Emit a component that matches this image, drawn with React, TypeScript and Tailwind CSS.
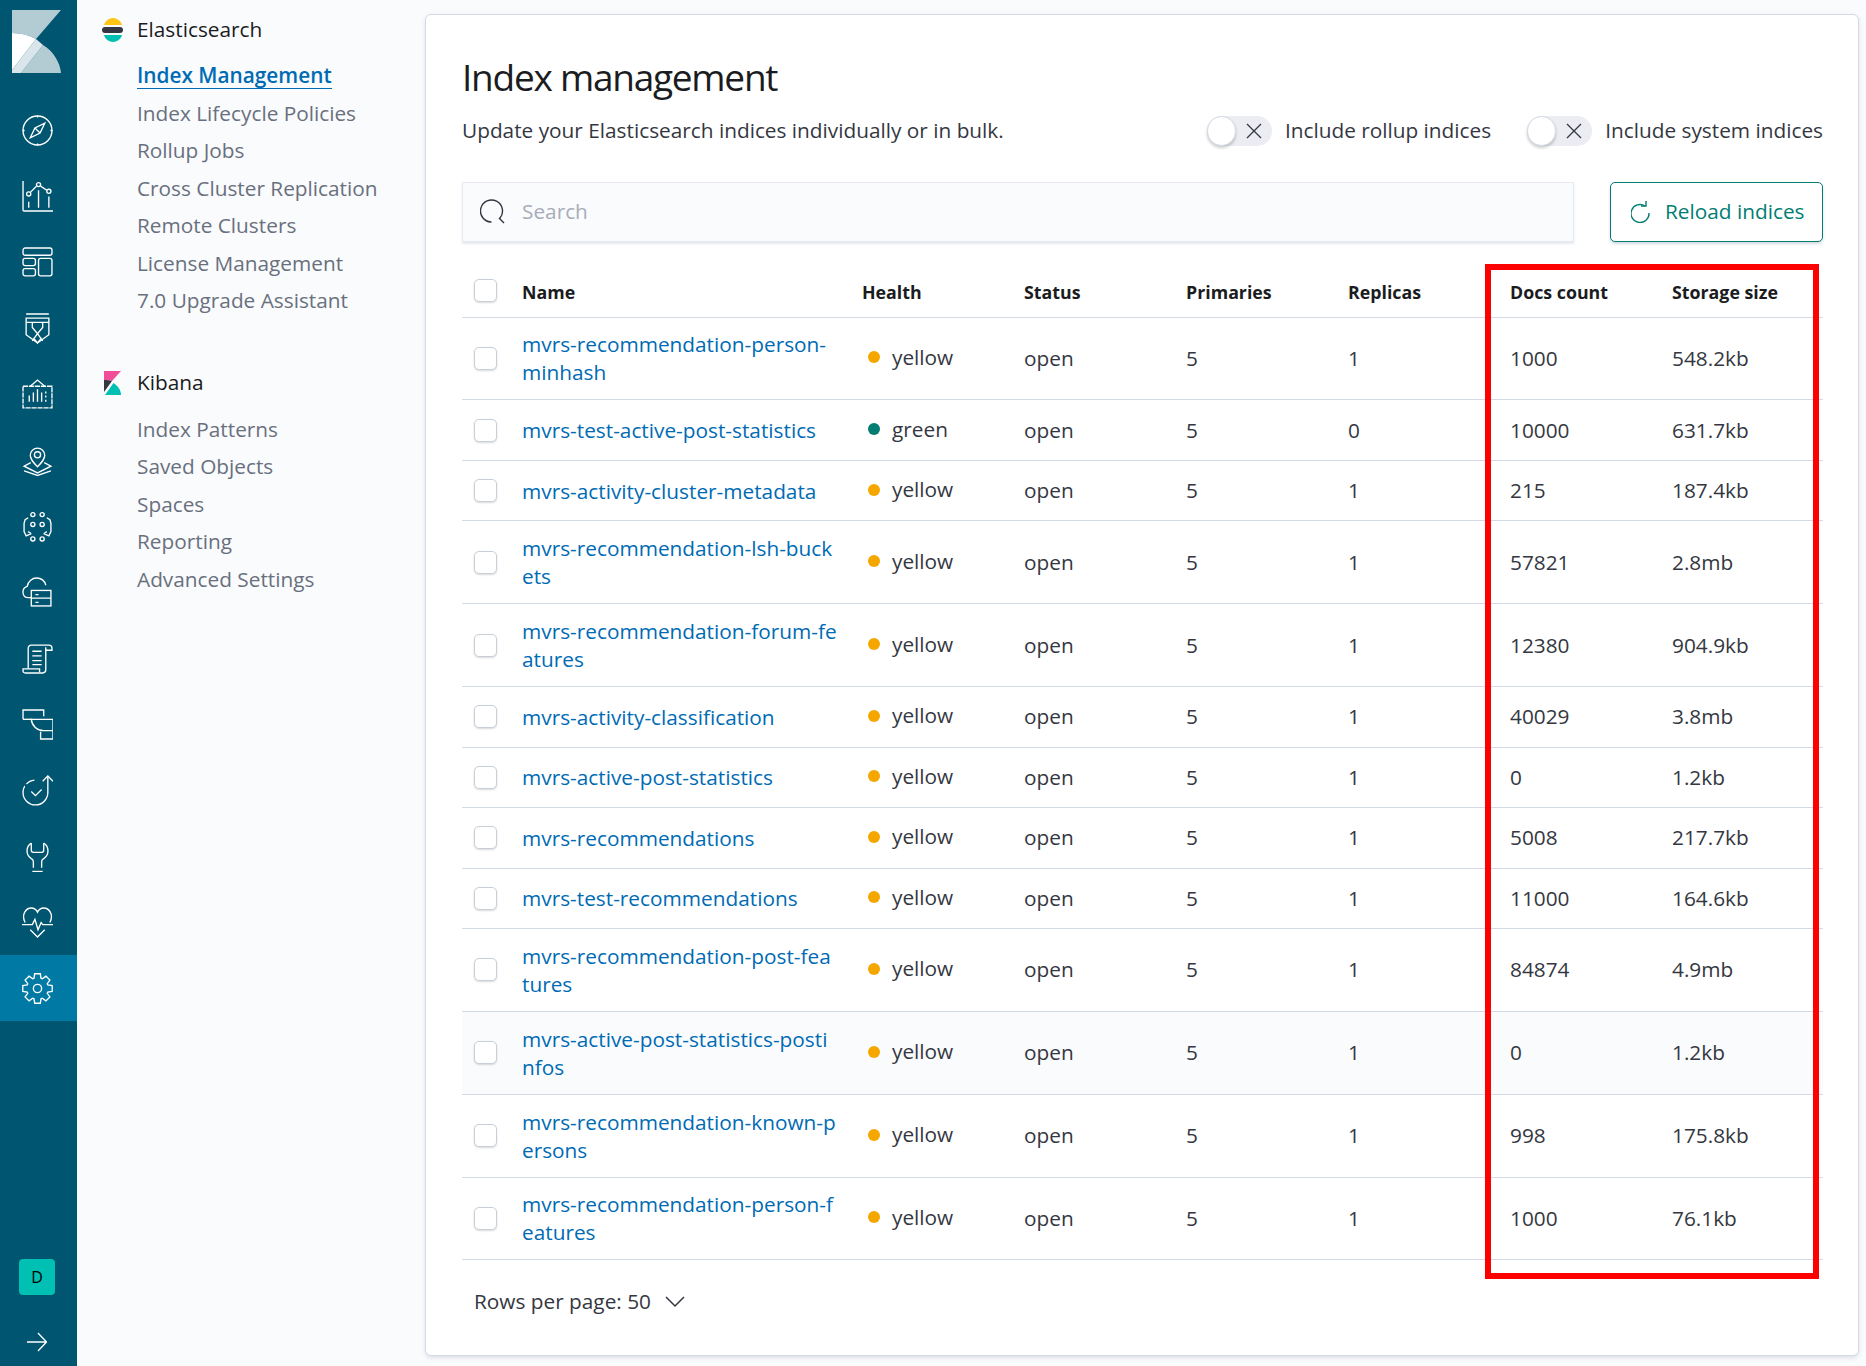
import type { ReactNode } from "react";

const elasticLinks = [
  "Index Lifecycle Policies",
  "Rollup Jobs",
  "Cross Cluster Replication",
  "Remote Clusters",
  "License Management",
  "7.0 Upgrade Assistant",
];

const kibanaLinks = ["Index Patterns", "Saved Objects", "Spaces", "Reporting", "Advanced Settings"];

const rows = [
  { name: "mvrs-recommendation-person-minhash", health: "yellow", replicas: 1, docs: "1000", size: "548.2kb", tall: true },
  { name: "mvrs-test-active-post-statistics", health: "green", replicas: 0, docs: "10000", size: "631.7kb" },
  { name: "mvrs-activity-cluster-metadata", health: "yellow", replicas: 1, docs: "215", size: "187.4kb" },
  { name: "mvrs-recommendation-lsh-buckets", health: "yellow", replicas: 1, docs: "57821", size: "2.8mb", tall: true },
  { name: "mvrs-recommendation-forum-features", health: "yellow", replicas: 1, docs: "12380", size: "904.9kb", tall: true },
  { name: "mvrs-activity-classification", health: "yellow", replicas: 1, docs: "40029", size: "3.8mb" },
  { name: "mvrs-active-post-statistics", health: "yellow", replicas: 1, docs: "0", size: "1.2kb" },
  { name: "mvrs-recommendations", health: "yellow", replicas: 1, docs: "5008", size: "217.7kb" },
  { name: "mvrs-test-recommendations", health: "yellow", replicas: 1, docs: "11000", size: "164.6kb" },
  { name: "mvrs-recommendation-post-features", health: "yellow", replicas: 1, docs: "84874", size: "4.9mb", tall: true },
  { name: "mvrs-active-post-statistics-postinfos", health: "yellow", replicas: 1, docs: "0", size: "1.2kb", tall: true, hover: true },
  { name: "mvrs-recommendation-known-persons", health: "yellow", replicas: 1, docs: "998", size: "175.8kb", tall: true },
  { name: "mvrs-recommendation-person-features", health: "yellow", replicas: 1, docs: "1000", size: "76.1kb", tall: true },
];

const NavIcon = ({ children }: { children: ReactNode }) => (
  <svg width="31" height="31" viewBox="0 0 30 30" fill="none" stroke="#fff" strokeWidth="1.3">
    {children}
  </svg>
);

// blocky 8-tooth gear for the management item
const gearPoints = () => {
  const pts: string[] = [];
  for (let i = 0; i < 8; i++) {
    const a = (i * Math.PI) / 4;
    [
      [-0.33, 10.5],
      [-0.19, 14.5],
      [0.19, 14.5],
      [0.33, 10.5],
    ].forEach(([da, r]) => {
      pts.push(`${(15 + r * Math.sin(a + da)).toFixed(2)},${(15 - r * Math.cos(a + da)).toFixed(2)}`);
    });
  }
  return pts.join(" ");
};

const navIcons: ReactNode[] = [
  <>
    <circle cx="15" cy="15" r="14" />
    <path d="M22 8 L17.500 17.500 L8 22 L12.500 12.500 Z" />
    <path d="M12.500 12.500 L17.500 17.500" />
    <path d="M15 .5v2M15 27.500v2M.5 15h2M27.500 15h2" />
  </>,
  <>
    <path d="M1 0v28a1 1 0 0 0 1 1h28" />
    <path d="M8 11l6-6M18 5l6 4" />
    <circle cx="6.500" cy="12.500" r="2" />
    <circle cx="16" cy="3.500" r="2" />
    <circle cx="26" cy="10" r="2" />
    <path d="M6.500 20v6M16 9v17M26 15v11" />
  </>,
  <>
    <rect x="1" y="1" width="28" height="7" rx="2" />
    <rect x="1" y="11" width="12" height="7" rx="2" />
    <rect x="1" y="21" width="12" height="7" rx="2" />
    <rect x="16" y="11" width="13" height="17" rx="2" />
  </>,
  <>
    <path d="M4 1h22M4 5h22v16l-11 8-11-8z" />
    <path d="M4 9h6v5l5 6 5-6V9h6M10 9h10M10 27l5-7 5 7M11 24l4 5 4-5" />
  </>,
  <>
    <path d="M8 7L15 1l7 6" />
    <path d="M1 7h28v21H1z" strokeDasharray="5 .8" />
    <path d="M7 22v-6M11 22v-9M15 22V10M19 22v-9M23 22v-2M23 18v-2M23 14v-2" />
  </>,
  <>
    <path d="M15 21c-4-4-7-7-7-11a7 7 0 0 1 14 0c0 4-3 7-7 11z" />
    <circle cx="15" cy="9.500" r="3" />
    <path d="M8.500 17L2 20.500l13 6.500 13-6.500L21.500 17" />
    <path d="M2 25l13 4.500L28 25" />
  </>,
  <>
    <circle cx="10.500" cy="3.500" r="2" />
    <circle cx="19.500" cy="3.500" r="2" />
    <circle cx="10.500" cy="13" r="2" />
    <circle cx="19.500" cy="13" r="2" />
    <circle cx="10.500" cy="27" r="2" />
    <circle cx="19.500" cy="27" r="2" />
    <path d="M6 6.500l-3 2L2 12v8l2 4 5-2M6 20l3 2M24 6.500l3 2L28 12v8l-2 4-5-2M24 20l-3 2" />
  </>,
  <>
    <path d="M9 20H6c-6 0-7-9-1-11 1-5 5-8 9-8 5 0 8 3 9 7" />
    <rect x="9" y="13" width="19" height="15" />
    <path d="M9 20.500h19M13 17h3M13 24.500h3" />
  </>,
  <>
    <path d="M6 25V5a3 3 0 0 1 3-3h17a3 3 0 0 1 3 3v2h-6M23 7V4M26 2H9" />
    <path d="M23 6v20a3 3 0 0 1-3 3H3a2 2 0 0 1-2-2v-2h16v3" />
    <path d="M10 8h9M10 12.500h9M10 17h9M10 21h9" />
  </>,
  <>
    <path d="M1 10V1h20v6" />
    <path d="M1 10h9" />
    <path d="M9 10h21v11h-9a12 12 0 0 1-12-11z" />
    <path d="M18 22v7h12v-8" />
  </>,
  <>
    <path d="M12 5a12 12 0 1 0 13 12V1" />
    <path d="M20 6l5-5 5 5" />
    <path d="M9 16l4 4 6-6" />
    <path d="M3 9l1.500 2" stroke="#005571" strokeWidth="2.500" />
  </>,
  <>
    <path d="M9 2C4 5 3 13 9 17c1 .5 2 1.500 2 3v6M21 2c5 3 6 11 0 15-1 .5-2 1.500-2 3v6" />
    <path d="M9 2v7a2 2 0 0 0 2 2h8a2 2 0 0 0 2-2V2" />
    <path d="M10 29.500h10" />
  </>,
  <>
    <path d="M3 15C-1 7 4 1 9 1c3 0 5 2 6 4 1-2 3-4 6-4 5 0 10 6 6 14" />
    <path d="M0 17h10l2.500-5 3 10 3-7 1.500 2h10" />
    <path d="M8 22l7 7 7-7" />
  </>,
  <>
    <polygon points={gearPoints()} />
    <circle cx="15" cy="15" r="4" />
  </>,
];

const KibanaLogo = () => (
  <svg width="50" height="64" viewBox="0 0 50 64">
    <path d="M0 0H49L24 29C17 25 9 23 0 23Z" fill="#fff" fillOpacity="0.7" />
    <path d="M0 23C9 23 17 25 24 29L0 60Z" fill="#fff" />
    <path d="M0 60L24 29L31 35L9 63H0Z" fill="#fff" fillOpacity="0.85" />
    <path d="M9 63L31 35C41 41 48 52 49 63Z" fill="#fff" fillOpacity="0.7" />
  </svg>
);

const ElasticLogo = () => (
  <svg width="22" height="24" viewBox="0 0 22 24">
    <path d="M2 7C3 3 7 0 11 0s8 3 9 7Z" fill="#fec514" />
    <rect x="0" y="9" width="21" height="6" rx="3" fill="#343741" />
    <path d="M2 17h18c-1 4-5 7-9 7s-8-3-9-7Z" fill="#00bfb3" />
  </svg>
);

const KibanaMiniLogo = () => (
  <svg width="18" height="24" viewBox="0 0 18 24">
    <path d="M0 0H17L8 10C6 9 3 9 0 9Z" fill="#f04e98" />
    <path d="M0 9C3 9 6 9 8 10L0 21Z" fill="#343741" />
    <path d="M1 24L9.500 12C14 15 17 19 17 24Z" fill="#00bfb3" />
  </svg>
);

const Switch = ({ label }: { label: string }) => (
  <div className="flex items-center gap-[13px]">
    <div className="relative flex h-[30px] w-[65px] items-center justify-end rounded-full bg-[#ebedf2] pr-[10px]">
      <span className="absolute left-0 top-0 h-[30px] w-[29px] rounded-full border border-[#d3dae6] bg-white shadow-[0_2px_3px_rgba(0,0,0,0.2)]" />
      <svg width="16" height="16" viewBox="0 0 16 16" stroke="#343741" strokeWidth="1.3">
        <path d="M1 1l14 14M15 1L1 15" />
      </svg>
    </div>
    <span>{label}</span>
  </div>
);

const Checkbox = () => (
  <span className="block h-[23px] w-[23px] rounded-[5px] border border-[#c9cfd9] bg-white shadow-[0_1px_2px_rgba(0,0,0,0.15)]" />
);

const headers = ["Health", "Status", "Primaries", "Replicas", "Docs count", "Storage size"];

const App = () => {
  return (
    <div className="relative flex h-[1366px] w-[1866px] overflow-hidden bg-[#fafbfd] font-['Open_Sans',sans-serif] text-[20.800px] text-[#343741]">
      <aside className="flex w-[77px] shrink-0 flex-col bg-[#005571]">
        <div className="h-[97px] pl-[12px] pt-[10px]">
          <KibanaLogo />
        </div>
        {navIcons.map((icon, i) => (
          <div
            key={i}
            className={
              i === 13
                ? "flex h-[66px] items-center justify-center bg-[#0079a5] pr-[3px]"
                : "flex h-[66px] items-center justify-center pr-[3px]"
            }
          >
            <NavIcon>{icon}</NavIcon>
          </div>
        ))}
        <div className="ml-[19px] mt-auto flex h-[36px] w-[36px] items-center justify-center rounded-[4px] bg-[#00bfb3] text-[16px] text-black">
          D
        </div>
        <div className="flex h-[71px] items-center justify-center pr-[3px] pt-[23px]">
          <svg width="20" height="20" viewBox="0 0 20 20" fill="none" stroke="#fff" strokeWidth="1.3">
            <path d="M0 10h19M11 1l8.500 9-8.500 9" />
          </svg>
        </div>
      </aside>

      <nav className="w-[348px] shrink-0 pl-[25px] pt-[13px]">
        <div className="flex h-[34px] items-center gap-[13px] text-[#1a1c21]">
          <ElasticLogo />
          <span className="font-medium">Elasticsearch</span>
        </div>
        <ul className="mt-[10px] pl-[35px] text-[#69707d]">
          <li className="flex h-[37.500px] items-center">
            <span className="border-b border-[#006bb4] font-semibold leading-[25px] text-[#006bb4]">Index Management</span>
          </li>
          {elasticLinks.map((link) => (
            <li key={link} className="flex h-[37.500px] items-center">
              {link}
            </li>
          ))}
        </ul>
        <div className="mt-[46px] flex h-[34px] items-center gap-[15px] pl-[2px] text-[#1a1c21]">
          <KibanaMiniLogo />
          <span className="font-medium">Kibana</span>
        </div>
        <ul className="mt-[11px] pl-[35px] text-[#69707d]">
          {kibanaLinks.map((link) => (
            <li key={link} className="flex h-[37.500px] items-center">
              {link}
            </li>
          ))}
        </ul>
      </nav>

      <main className="mb-[10px] mr-[7px] mt-[14px] flex-1 rounded-[6px] border border-[#d3dae6] bg-white pl-[36px] pr-[35px] pt-[36px] shadow-[0_2px_4px_rgba(152,162,179,0.3)]">
        <h1 className="text-[37px] font-medium leading-[52px] tracking-[-1.250px] text-[#1a1c21]">Index management</h1>
        <div className="mt-[13px] flex h-[30px] items-center">
          <p className="flex-1">Update your Elasticsearch indices individually or in bulk.</p>
          <div className="flex items-center gap-[36px]">
            <Switch label="Include rollup indices" />
            <Switch label="Include system indices" />
          </div>
        </div>
        <div className="mt-[36px] flex gap-[36px]">
          <div className="flex h-[60px] flex-1 items-center gap-[16px] border border-[#e6e9ef] bg-[#fafbfd] pl-[17px] text-[#a7adb8] shadow-[0_2px_2px_rgba(152,162,179,0.25)]">
            <svg width="26" height="26" viewBox="0 0 26 26" fill="none" stroke="#343741" strokeWidth="1.4">
              <path d="M20 19A11 11 0 1 0 11 23" strokeLinecap="round" />
              <path d="M19 19l5 5" />
            </svg>
            <span>Search</span>
          </div>
          <button className="flex h-[60px] w-[213px] items-center justify-start gap-[14px] rounded-[5px] border border-[#017d73] bg-white pl-[20px] text-[#017d73] shadow-[0_2px_3px_rgba(152,162,179,0.4)]">
            <svg width="20" height="22" viewBox="0 0 20 22" fill="none" stroke="#017d73" strokeWidth="1.4">
              <path d="M14 5a9 9 0 1 0 4 7" />
              <path d="M15 0v5h-5" />
            </svg>
            Reload indices
          </button>
        </div>

        <table className="mt-[14px] w-[1361px] table-fixed border-collapse">
          <colgroup>
            <col className="w-[50px]" />
            <col className="w-[340px]" />
            <col className="w-[162px]" />
            <col className="w-[162px]" />
            <col className="w-[162px]" />
            <col className="w-[162px]" />
            <col className="w-[162px]" />
            <col className="w-[161px]" />
          </colgroup>
          <thead>
            <tr className="h-[61px] border-b border-[#d3dae6]">
              <th className="pl-[12px] pt-[8px] text-left">
                <Checkbox />
              </th>
              <th className="px-[10px] pt-[12px] text-left text-[17.800px] font-bold text-[#1a1c21]">Name</th>
              {headers.map((h) => (
                <th key={h} className="px-[10px] pt-[12px] text-left text-[17.800px] font-bold text-[#1a1c21]">
                  {h}
                </th>
              ))}
            </tr>
          </thead>
          <tbody>
            {rows.map((row) => (
              <tr
                key={row.name}
                className={`border-b border-[#d3dae6] ${row.tall ? "h-[82.850px]" : "h-[60.500px]"} ${row.hover ? "bg-[#fafbfd]" : ""}`}
              >
                <td className="pl-[12px]">
                  <Checkbox />
                </td>
                <td className="break-all pl-[10px] pr-[14px] leading-[28px] text-[#006bb4]">{row.name}</td>
                <td className="px-[10px]">
                  <div className="-mt-[2px] flex items-center gap-[12px] pl-[6px]">
                    <span
                      className={
                        row.health === "green"
                          ? "h-[12px] w-[12px] rounded-full bg-[#017d73]"
                          : "h-[12px] w-[12px] rounded-full bg-[#f5a700]"
                      }
                    />
                    {row.health}
                  </div>
                </td>
                <td className="px-[10px]">open</td>
                <td className="px-[10px]">5</td>
                <td className="px-[10px]">{row.replicas}</td>
                <td className="px-[10px]">{row.docs}</td>
                <td className="px-[10px]">{row.size}</td>
              </tr>
            ))}
          </tbody>
        </table>

        <div className="mt-[26px] flex items-center gap-[14px] pl-[12px]">
          <span>Rows per page: 50</span>
          <svg width="20" height="12" viewBox="0 0 20 12" fill="none" stroke="#343741" strokeWidth="1.5">
            <path d="M1 1l9 9 9-9" />
          </svg>
        </div>
      </main>

      <div className="absolute left-[1485px] top-[264px] h-[1015px] w-[334px] border-[6px] border-[#ff0000]" />
    </div>
  );
};

export default App;
